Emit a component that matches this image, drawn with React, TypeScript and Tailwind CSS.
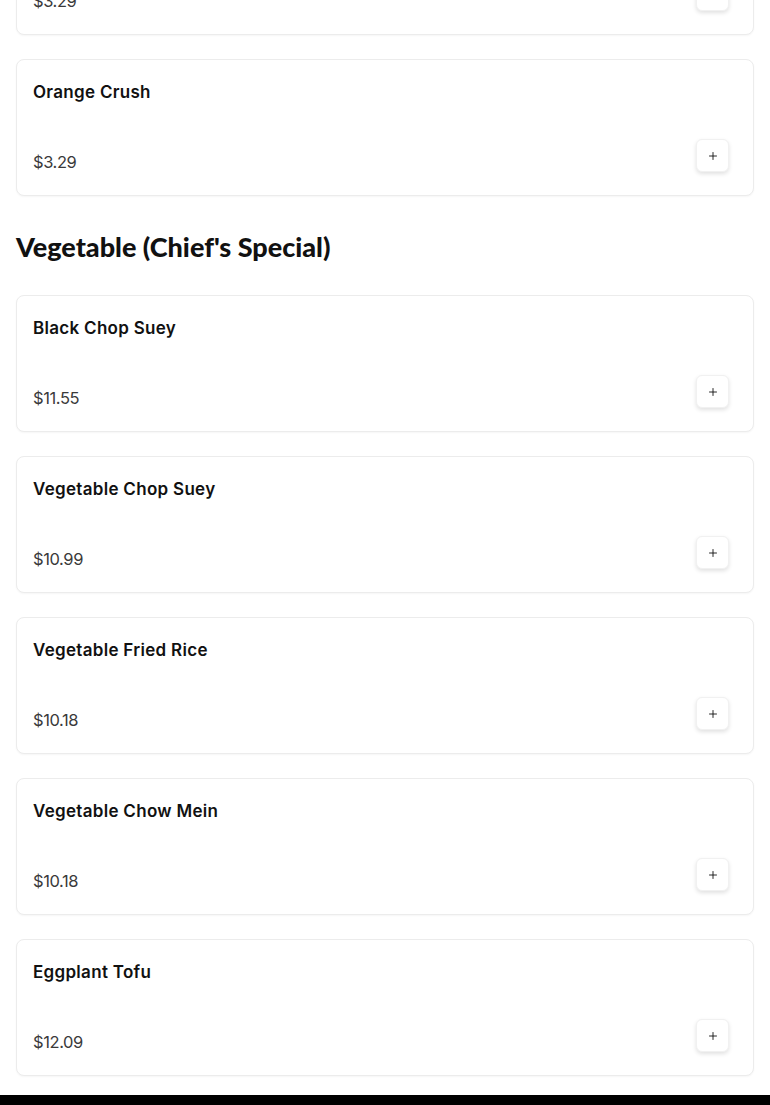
import { Plus } from "lucide-react";

type Item = { name: string; price: string };

const drinks: Item[] = [
  { name: "Orange Crush", price: "$3.29" },
  { name: "Orange Crush", price: "$3.29" },
];

const vegetable: Item[] = [
  { name: "Black Chop Suey", price: "$11.55" },
  { name: "Vegetable Chop Suey", price: "$10.99" },
  { name: "Vegetable Fried Rice", price: "$10.18" },
  { name: "Vegetable Chow Mein", price: "$10.18" },
  { name: "Eggplant Tofu", price: "$12.09" },
];

const MenuCard = ({ item }: { item: Item }) => {
  return (
    <div className="h-[137px] rounded-lg border border-[#ececec] bg-white px-4 pt-5 shadow-[0_1px_2px_rgba(0,0,0,0.04)]">
      <h3 className="text-[17px] font-semibold leading-6 tracking-[0.3px] text-[#111]">
        {item.name}
      </h3>
      <div className="mt-[35px] flex items-start justify-between">
        <span className="mt-[11px] text-[16.5px] leading-6 tracking-[-0.4px] text-[#3a3a3a]">
          {item.price}
        </span>
        {/* add button */}
        <button className="mr-2 flex h-[33px] w-[33px] items-center justify-center rounded-md border border-[#f1f1f1] bg-white shadow-[0_2px_4px_rgba(0,0,0,0.12)]">
          <Plus size={12} strokeWidth={1.8} className="text-[#111]" />
        </button>
      </div>
    </div>
  );
};

const App = () => {
  return (
    <div
      className="min-h-[1105px] overflow-hidden bg-white"
      style={{ fontFamily: "Inter, 'Noto Sans', sans-serif" }}
    >
      <div className="px-4">
        <div className="mt-[-102px] flex flex-col gap-6">
          {drinks.map((item, i) => (
            <MenuCard key={i} item={item} />
          ))}
        </div>

        <h2
          className="mt-[35px] mb-8 text-[27px] font-black leading-8 text-[#111]"
          style={{ fontFamily: "Lato, 'Noto Sans', sans-serif" }}
        >
          Vegetable (Chief's Special)
        </h2>

        <div className="flex flex-col gap-6">
          {vegetable.map((item, i) => (
            <MenuCard key={i} item={item} />
          ))}
        </div>
      </div>

      {/* bottom bar */}
      <div className="mt-[19px] h-[40px] bg-black" />
    </div>
  );
};

export default App;
